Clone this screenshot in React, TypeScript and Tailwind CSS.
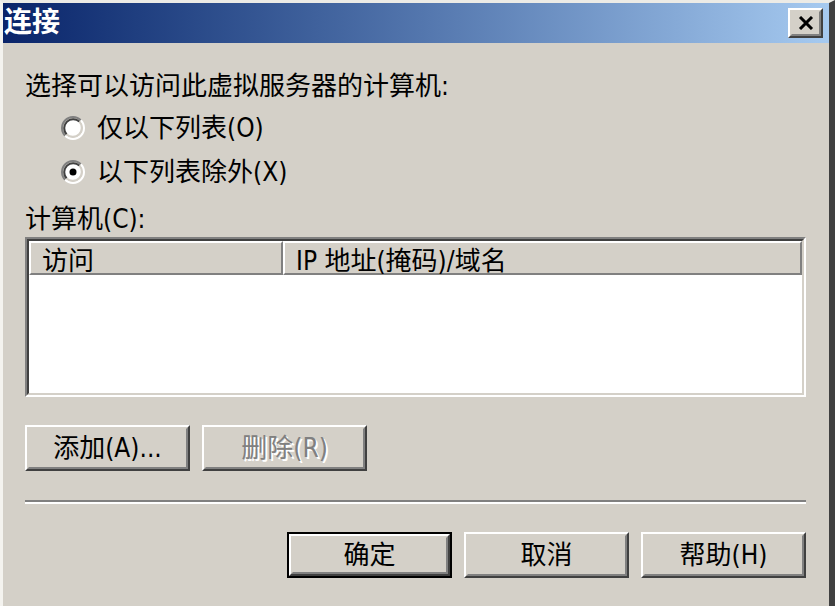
import React from "react";

function L({ children }: { children: React.ReactNode }) {
  return <span className="font-['Liberation_Sans_Narrow','DejaVu_Sans_Condensed',sans-serif] text-[26px]">{children}</span>;
}

function Radio({ checked }: { checked?: boolean }) {
  return (
    <svg width="24" height="24" viewBox="0 0 24 24" className="shrink-0">
      <circle cx="12" cy="12" r="9" fill="#ffffff" />
      <path d="M4.22 19.78 A11 11 0 0 1 19.78 4.22" fill="none" stroke="#808080" strokeWidth="2" />
      <path d="M19.78 4.22 A11 11 0 0 1 4.22 19.78" fill="none" stroke="#ffffff" strokeWidth="2" />
      <path d="M5.64 18.36 A9 9 0 0 1 18.36 5.64" fill="none" stroke="#404040" strokeWidth="2" />
      <path d="M18.36 5.64 A9 9 0 0 1 5.64 18.36" fill="none" stroke="#d4d0c8" strokeWidth="2" />
      {checked && <circle cx="12" cy="12" r="3.5" fill="#000000" />}
    </svg>
  );
}

function Btn({
  children,
  disabled,
  isDefault,
}: {
  children: React.ReactNode;
  disabled?: boolean;
  isDefault?: boolean;
}) {
  const inner = (
    <div className="h-full w-full border-2 border-t-white border-l-white border-b-[#404040] border-r-[#404040]">
      <div
        className={
          disabled
            ? "h-full w-full border-2 border-t-[#d4d0c8] border-l-[#d4d0c8] border-b-[#808080] border-r-[#808080] flex items-center justify-center text-[26px] leading-none text-[#808080] [text-shadow:2px_2px_0_#ffffff]"
            : "h-full w-full border-2 border-t-[#d4d0c8] border-l-[#d4d0c8] border-b-[#808080] border-r-[#808080] flex items-center justify-center text-[26px] leading-none text-black"
        }
      >
        {children}
      </div>
    </div>
  );
  if (isDefault) {
    return <div className="w-[165px] h-[46px] border-2 border-t-black border-l-black border-b-black border-r-black">{inner}</div>;
  }
  return <div className="w-[165px] h-[46px]">{inner}</div>;
}

function HeaderCell({ children, className }: { children: React.ReactNode; className: string }) {
  return (
    <div
      className={
        "h-full border-2 border-t-white border-l-white border-b-[#808080] border-r-[#808080] bg-[#d4d0c8] flex items-center pl-[11px] pt-[5px] text-[26px] leading-none " +
        className
      }
    >
      {children}
    </div>
  );
}

export default function App() {
  return (
    <div className="w-[835px] h-[606px] overflow-hidden bg-[#d4d0c8] font-['Liberation_Sans','Noto_Sans_CJK_SC',sans-serif] text-black">
      <div className="h-full flex flex-col border-t-[3px] border-t-[#ecebe6] border-l-[3px] border-l-[#f4f3ef] border-r-[6px] border-r-[#404040]">
        {/* title bar */}
        <div className="h-[40px] shrink-0 flex items-center justify-between bg-linear-to-r from-[#0a246a] to-[#a6caf0]">
          <span className="pl-[1px] text-white font-bold text-[28px] leading-none">连接</span>
          <div className="mr-[6px] w-[35px] h-[30px] border-2 border-t-white border-l-white border-b-[#404040] border-r-[#404040]">
            <div className="h-full w-full border-2 border-t-[#d4d0c8] border-l-[#d4d0c8] border-b-[#808080] border-r-[#808080] bg-[#d4d0c8] flex items-center justify-center">
              <svg width="16" height="14" viewBox="0 0 16 14">
                <path d="M2 1 L14 13 M14 1 L2 13" stroke="#000" strokeWidth="3" fill="none" />
              </svg>
            </div>
          </div>
        </div>

        {/* body */}
        <div className="flex flex-col pl-[22px] pr-[23px]">
          <div className="mt-[27px] h-[32px] flex items-center text-[26px] leading-none">
            <span>
              选择可以访问此虚拟服务器的计算机<L>:</L>
            </span>
          </div>
          <div className="mt-[4px] h-[44px] flex items-center gap-[12px] pl-[36px] text-[26px] leading-none">
            <Radio />
            <span>
              仅以下列表<L>(O)</L>
            </span>
          </div>
          <div className="h-[44px] flex items-center gap-[12px] pl-[36px] text-[26px] leading-none">
            <Radio checked />
            <span>
              以下列表除外<L>(X)</L>
            </span>
          </div>
          <div className="mt-[9px] h-[32px] flex items-center text-[26px] leading-none">
            <span>
              计算机<L>(C):</L>
            </span>
          </div>

          {/* list */}
          <div className="mt-[2px] h-[160px] border-2 border-t-[#808080] border-l-[#808080] border-b-white border-r-white">
            <div className="h-full border-2 border-t-[#404040] border-l-[#404040] border-b-[#d4d0c8] border-r-[#d4d0c8] bg-white flex flex-col">
              <div className="h-[34px] flex">
                <HeaderCell className="w-[254px] shrink-0">访问</HeaderCell>
                <HeaderCell className="flex-1">
                  <span>
                    <L>IP </L>地址<L>(</L>掩码<L>)/</L>域名
                  </span>
                </HeaderCell>
              </div>
              <div className="flex-1 bg-white" />
            </div>
          </div>

          {/* add / remove */}
          <div className="mt-[28px] flex gap-[12px]">
            <Btn>
              <span>
                添加<L>(A)...</L>
              </span>
            </Btn>
            <Btn disabled>
              <span>
                删除<L>(R)</L>
              </span>
            </Btn>
          </div>

          {/* separator */}
          <div className="mt-[29px] h-[4px] border-t-2 border-t-[#808080] border-b-2 border-b-white" />

          {/* bottom buttons */}
          <div className="mt-[28px] flex justify-end gap-[12px]">
            <Btn isDefault>确定</Btn>
            <Btn>取消</Btn>
            <Btn>
              <span>
                帮助<L>(H)</L>
              </span>
            </Btn>
          </div>
        </div>
      </div>
    </div>
  );
}
